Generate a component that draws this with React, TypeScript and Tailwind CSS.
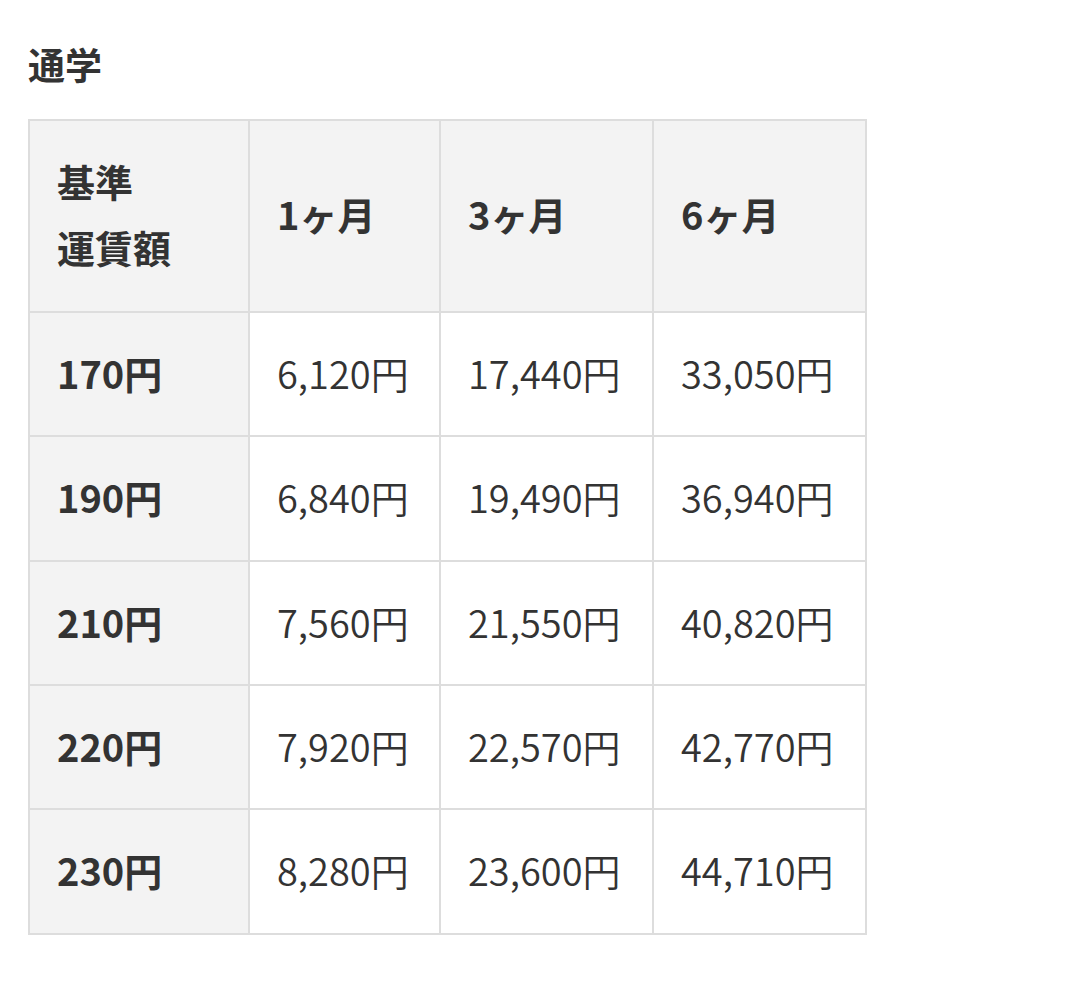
import React from "react";

const rows = [
  ["170円", "6,120円", "17,440円", "33,050円", "h-[124px]"],
  ["190円", "6,840円", "19,490円", "36,940円", "h-[125px]"],
  ["210円", "7,560円", "21,550円", "40,820円", "h-[124px]"],
  ["220円", "7,920円", "22,570円", "42,770円", "h-[124px]"],
  ["230円", "8,280円", "23,600円", "44,710円", "h-[125px]"],
];

export default function App() {
  return (
    <div
      className="min-h-[991px] bg-white px-[28px] pt-[37px] text-[#333]"
      style={{ fontFamily: '"Noto Sans CJK JP", "Noto Sans", sans-serif' }}
    >
      <h2 className="mb-[28px] text-[37px] font-bold leading-[54px]">通学</h2>
      <table className="table-fixed border-collapse text-[38px] leading-[66px]">
        <colgroup>
          <col className="w-[220px]" />
          <col className="w-[191px]" />
          <col className="w-[213px]" />
          <col className="w-[213px]" />
        </colgroup>
        <thead>
          <tr className="bg-[#f3f3f3]">
            <th className="h-[192px] border-2 border-[#ddd] px-[27px] pb-[4px] text-left font-bold">
              基準
              <br />
              運賃額
            </th>
            <th className="border-2 border-[#ddd] px-[27px] pb-[4px] text-left font-bold">1ヶ月</th>
            <th className="border-2 border-[#ddd] px-[27px] pb-[4px] text-left font-bold">3ヶ月</th>
            <th className="border-2 border-[#ddd] px-[27px] pb-[4px] text-left font-bold">6ヶ月</th>
          </tr>
        </thead>
        <tbody>
          {rows.map((r) => (
            <tr key={r[0]}>
              <td className={`${r[4]} border-2 border-[#ddd] bg-[#f3f3f3] px-[27px] pb-[3px] font-bold`}>{r[0]}</td>
              <td className="border-2 border-[#ddd] px-[27px] pb-[3px] font-[350]">{r[1]}</td>
              <td className="border-2 border-[#ddd] px-[27px] pb-[3px] font-[350]">{r[2]}</td>
              <td className="border-2 border-[#ddd] px-[27px] pb-[3px] font-[350]">{r[3]}</td>
            </tr>
          ))}
        </tbody>
      </table>
    </div>
  );
}
